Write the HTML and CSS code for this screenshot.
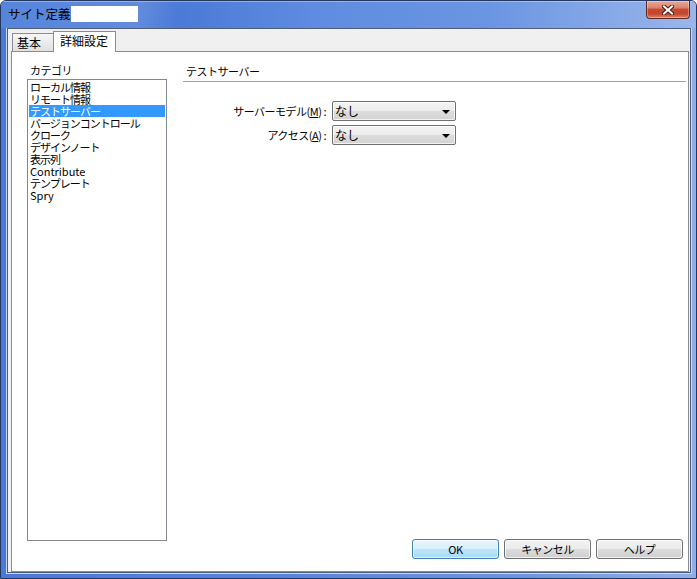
FILE: index.html
```html
<!DOCTYPE html>
<html lang="ja">
<head>
    <meta charset="UTF-8">
    <title>サイト定義</title>
    <link rel="stylesheet" href="styles.css">
</head>
<body>
    <div class="window">
        <div class="titlebar">
            <span class="title">サイト定義</span>
            <span class="title-blank"></span>
            <div class="close-btn">
                <svg width="12" height="10" viewBox="0 0 12 10">
                    <path d="M2 1.5 L10 8.5 M10 1.5 L2 8.5" stroke="#4b1c14" stroke-width="4" stroke-linecap="square"/>
                    <path d="M2 1.5 L10 8.5 M10 1.5 L2 8.5" stroke="#fff" stroke-width="2" stroke-linecap="square"/>
                </svg>
            </div>
        </div>

        <div class="client">
            <div class="tabs">
                <div class="tab">基本</div>
                <div class="tab active">詳細設定</div>
            </div>

            <div class="panel">
                <div class="category">
                    <div class="category-label">カテゴリ</div>
                    <ul class="listbox">
                        <li>ローカル情報</li>
                        <li>リモート情報</li>
                        <li class="selected">テストサーバー</li>
                        <li>バージョンコントロール</li>
                        <li>クローク</li>
                        <li>デザインノート</li>
                        <li>表示列</li>
                        <li class="latin">Contribute</li>
                        <li>テンプレート</li>
                        <li class="latin">Spry</li>
                    </ul>
                </div>

                <div class="settings">
                    <div class="section-title">テストサーバー</div>

                    <div class="form">
                        <label>サーバーモデル(<u>M</u>) :</label>
                        <div class="combo"><span>なし</span><i class="arrow"></i></div>
                        <label>アクセス(<u>A</u>) :</label>
                        <div class="combo"><span>なし</span><i class="arrow"></i></div>
                    </div>

                    <div class="buttons">
                        <button class="default">OK</button>
                        <button>キャンセル</button>
                        <button>ヘルプ</button>
                    </div>
                </div>
            </div>
        </div>
    </div>
</body>
</html>
```

FILE: styles.css
```css
body {
    margin: 0;
    font-family: "Noto Sans CJK JP", "Liberation Sans", sans-serif;
    font-size: 12px;
    color: #000;
    background: #fff;
}

.window {
    width: 697px;
    height: 579px;
    box-sizing: border-box;
    border: 1px solid #24385f;
    border-radius: 6px 6px 0 0;
    background: linear-gradient(to right, #4a79d7 0%, #5584dc 40%, #6a95e2 75%, #8eaeea 100%);
    display: flex;
    flex-direction: column;
    overflow: hidden;
}

.titlebar {
    position: relative;
    height: 27px;
    display: flex;
    align-items: center;
    padding-left: 7px;
    background:
        linear-gradient(100deg, rgba(255,255,255,0) 0%, rgba(255,255,255,0.12) 20%, rgba(255,255,255,0) 26%, rgba(255,255,255,0) 100%),
        linear-gradient(to right, #5585dc 0%, #4a79d7 25%, #5f8ce0 45%, #6a95e2 70%, #9ab6ec 100%);
    box-shadow: inset 0 1px 0 rgba(255,255,255,0.35);
}

.title {
    font-size: 12.5px;
    line-height: 16px;
    margin-top: -1px;
}

.title-blank {
    display: inline-block;
    width: 67px;
    height: 16px;
    background: #fff;
    margin-top: -1px;
}

.close-btn {
    position: absolute;
    left: 645px;
    top: 0;
    width: 42px;
    height: 17px;
    border: 1px solid #5e2a22;
    border-top: none;
    border-radius: 0 0 4px 4px;
    background: linear-gradient(#e7aa9a 0%, #d9826d 40%, #c44a32 50%, #c5452c 75%, #e08468 100%);
    box-shadow: inset 0 0 0 1px rgba(255,255,255,0.3);
    display: flex;
    align-items: center;
    justify-content: center;
}

.client {
    flex: 1;
    margin: 0 5px 5px 6px;
    border: 1px solid #4f5d78;
    box-shadow: 0 0 0 1px #c5d5f2;
    background: #f0f0f0;
    display: flex;
    flex-direction: column;
}

.tabs {
    height: 22px;
    display: flex;
    align-items: flex-end;
    padding-left: 4px;
}

.tab {
    height: 17px;
    line-height: 17px;
    padding: 0 4px;
    width: 32px;
    border: 1px solid #898c95;
    border-bottom: none;
    background: linear-gradient(#f6f6f6, #e1e1e1);
}

.tab.active {
    position: relative;
    z-index: 1;
    height: 20px;
    line-height: 18px;
    width: 55px;
    margin-left: -1px;
    margin-bottom: -1px;
    padding: 0 0 0 6px;
    background: #fff;
}

.panel {
    flex: 1;
    margin: 0 1px 0 3px;
    border: 1px solid #898c95;
    background: #fff;
    display: flex;
    padding: 12px 2px 12px 15px;
    gap: 16px;
}

.category {
    width: 140px;
}

.category-label {
    font-size: 11px;
    letter-spacing: -0.5px;
    line-height: 12px;
    padding-left: 3px;
    margin-bottom: 3px;
}

.listbox {
    list-style: none;
    margin: 0;
    padding: 1px 0 0 1px;
    height: 459px;
    border: 1px solid #828790;
}

.listbox li {
    height: 12px;
    line-height: 12px;
    font-size: 11px;
    letter-spacing: -1px;
    padding-left: 1px;
    white-space: nowrap;
}

.listbox li.latin {
    letter-spacing: 0;
}

.listbox li.selected {
    background: #3399ff;
    color: #fff;
    margin-right: 1px;
}

.settings {
    flex: 1;
    display: flex;
    flex-direction: column;
}

.section-title {
    font-size: 11px;
    letter-spacing: -0.5px;
    line-height: 12px;
    padding: 1px 0 4px 3px;
    border-bottom: 1px solid #a0a0a0;
}

.form {
    margin-top: 19px;
    display: grid;
    grid-template-columns: 143px 124px;
    column-gap: 6px;
    row-gap: 4px;
}

.form label {
    text-align: right;
    line-height: 20px;
    font-size: 11px;
    letter-spacing: -0.5px;
}

.combo {
    height: 18px;
    border: 1px solid #707070;
    border-radius: 2px;
    background: linear-gradient(#f4f4f4 0%, #ebebeb 50%, #dddddd 51%, #d3d3d3 100%);
    box-shadow: inset 0 0 0 1px rgba(255,255,255,0.7);
    display: flex;
    align-items: center;
    justify-content: space-between;
    padding: 0 5px 0 2px;
    line-height: 18px;
}

.arrow {
    width: 0;
    height: 0;
    border-left: 4px solid transparent;
    border-right: 4px solid transparent;
    border-top: 4px solid #000;
    margin-top: 1px;
}

.buttons {
    margin-top: auto;
    display: flex;
    justify-content: flex-end;
    gap: 5px;
    padding-right: 3px;
}

button {
    width: 87px;
    height: 20px;
    padding: 0;
    font-family: inherit;
    font-size: 11px;
    letter-spacing: -0.5px;
    color: #000;
    border: 1px solid #707070;
    border-radius: 3px;
    background: linear-gradient(#f2f2f2 0%, #ebebeb 50%, #dddddd 51%, #cfcfcf 100%);
    box-shadow: inset 0 0 0 1px rgba(255,255,255,0.7);
}

button.default {
    border-color: #3c7fb1;
    background: linear-gradient(#eaf6fd 0%, #d9f0fc 50%, #bee6fd 51%, #a7d9f5 100%);
}
```
